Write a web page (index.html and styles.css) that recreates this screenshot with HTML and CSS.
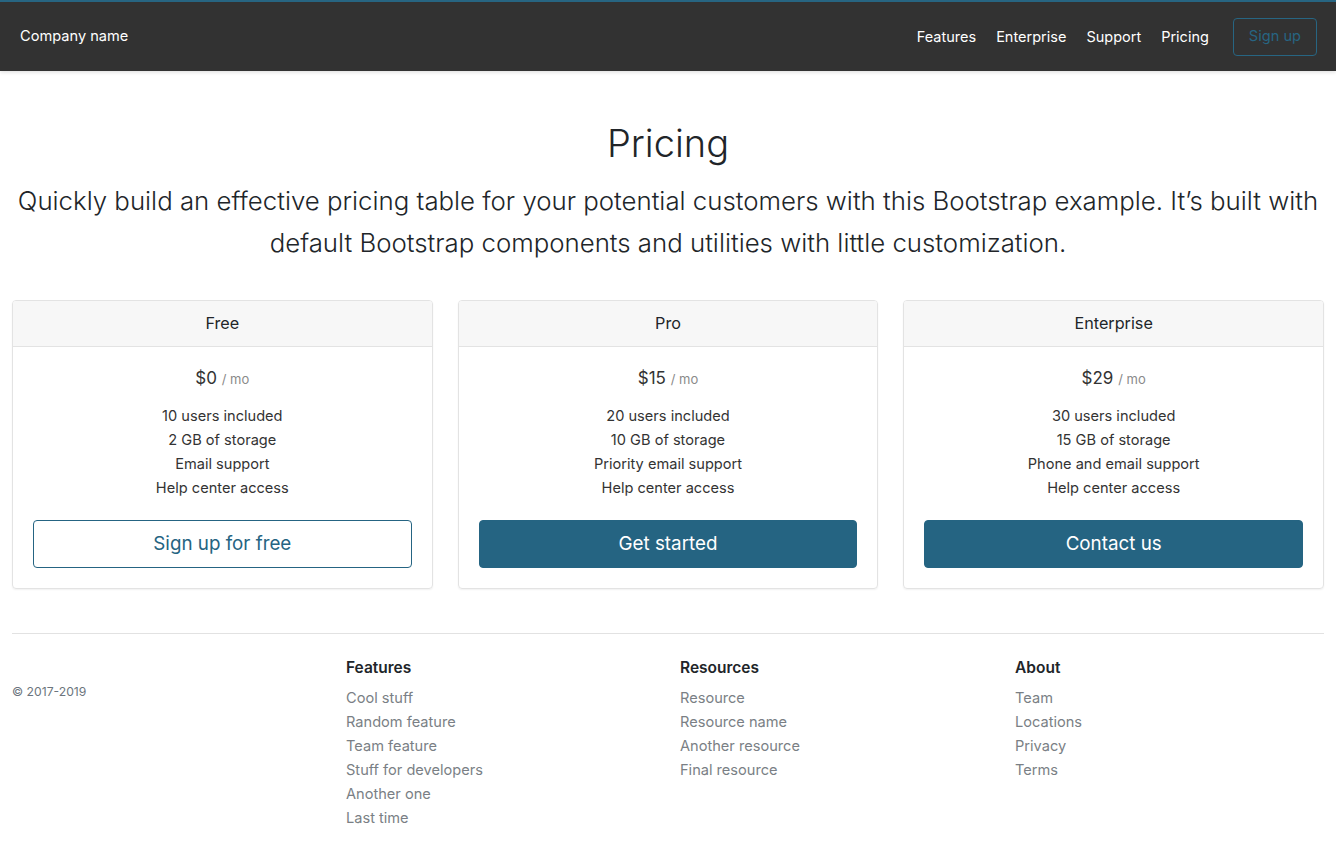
FILE: index.html
```html
<!DOCTYPE html>
<html lang="en">
<head>
<meta charset="utf-8">
<title>Pricing</title>
<link rel="stylesheet" href="styles.css">
</head>
<body>
<header class="navbar">
  <a class="brand" href="#">Company name</a>
  <nav class="nav">
    <a href="#">Features</a>
    <a href="#">Enterprise</a>
    <a href="#">Support</a>
    <a href="#">Pricing</a>
  </nav>
  <a class="btn-signup" href="#">Sign up</a>
</header>

<section class="hero">
  <h1>Pricing</h1>
  <p class="lead">Quickly build an effective pricing table for your potential customers with this Bootstrap example. It’s built with default Bootstrap components and utilities with little customization.</p>
</section>

<main class="cards">
  <div class="card">
    <div class="card-header">Free</div>
    <div class="card-body">
      <div class="price">$0 <small>/ mo</small></div>
      <ul class="features">
        <li>10 users included</li>
        <li>2 GB of storage</li>
        <li>Email support</li>
        <li>Help center access</li>
      </ul>
      <a class="btn btn-outline" href="#">Sign up for free</a>
    </div>
  </div>
  <div class="card">
    <div class="card-header">Pro</div>
    <div class="card-body">
      <div class="price">$15 <small>/ mo</small></div>
      <ul class="features">
        <li>20 users included</li>
        <li>10 GB of storage</li>
        <li>Priority email support</li>
        <li>Help center access</li>
      </ul>
      <a class="btn btn-solid" href="#">Get started</a>
    </div>
  </div>
  <div class="card">
    <div class="card-header">Enterprise</div>
    <div class="card-body">
      <div class="price">$29 <small>/ mo</small></div>
      <ul class="features">
        <li>30 users included</li>
        <li>15 GB of storage</li>
        <li>Phone and email support</li>
        <li>Help center access</li>
      </ul>
      <a class="btn btn-solid" href="#">Contact us</a>
    </div>
  </div>
</main>

<footer class="footer">
  <div class="footer-grid">
    <div class="copy">© 2017-2019</div>
    <div class="fcol">
      <h5>Features</h5>
      <ul>
        <li><a href="#">Cool stuff</a></li>
        <li><a href="#">Random feature</a></li>
        <li><a href="#">Team feature</a></li>
        <li><a href="#">Stuff for developers</a></li>
        <li><a href="#">Another one</a></li>
        <li><a href="#">Last time</a></li>
      </ul>
    </div>
    <div class="fcol">
      <h5>Resources</h5>
      <ul>
        <li><a href="#">Resource</a></li>
        <li><a href="#">Resource name</a></li>
        <li><a href="#">Another resource</a></li>
        <li><a href="#">Final resource</a></li>
      </ul>
    </div>
    <div class="fcol">
      <h5>About</h5>
      <ul>
        <li><a href="#">Team</a></li>
        <li><a href="#">Locations</a></li>
        <li><a href="#">Privacy</a></li>
        <li><a href="#">Terms</a></li>
      </ul>
    </div>
  </div>
</footer>
</body>
</html>
```

FILE: styles.css
```css
* { box-sizing: border-box; }
html, body { margin: 0; padding: 0; }
body {
  font-family: Inter, "Noto Sans", "Liberation Sans", sans-serif;
  color: #212529;
  background: #fff;
  font-size: 16px;
  line-height: 1.5;
}
a { text-decoration: none; }
ul { list-style: none; margin: 0; padding: 0; }

.navbar {
  height: 71px;
  background: #323232;
  border-top: 2px solid #276582;
  display: flex;
  align-items: center;
  padding: 0 19px 0 20px;
  box-shadow: 0 1px 4px rgba(0,0,0,0.15);
}
.brand {
  color: #fff;
  font-size: 14.6px;
  flex: 1;
}
.nav {
  display: flex;
  gap: 20px;
  margin-right: 24px;
}
.nav a {
  color: #fff;
  font-size: 14.5px;
}
.btn-signup {
  color: #276582;
  border: 1px solid #276582;
  border-radius: 4px;
  font-size: 14.6px;
  height: 38px;
  padding: 0 15px;
  display: flex;
  align-items: center;
}

.hero {
  text-align: center;
  padding: 48px 12px 0;
}
.hero h1 {
  margin: 0;
  font-size: 38px;
  font-weight: 300;
  line-height: 48px;
}
.lead {
  margin: 13px 0 0;
  font-size: 25.8px;
  font-weight: 300;
  line-height: 42px;
}

.cards {
  display: grid;
  grid-template-columns: repeat(3, 1fr);
  gap: 25px;
  padding: 0 12px;
  margin-top: 36px;
}
.card {
  border: 1px solid #e3e3e3;
  border-radius: 4px;
  box-shadow: 0 1px 2px rgba(0,0,0,0.06);
  overflow: hidden;
}
.card-header {
  background: #f7f7f7;
  border-bottom: 1px solid #e3e3e3;
  text-align: center;
  height: 46px;
  line-height: 45px;
  font-size: 16.2px;
}
.card-body {
  padding: 17px 20px 20px;
  text-align: center;
}
.price {
  font-size: 17px;
  line-height: 28px;
  color: #333;
}
.price small {
  font-size: 13px;
  color: #8a8a8a;
}
.features {
  margin-top: 11px;
  margin-bottom: 20px;
  color: #333;
  font-size: 14.6px;
  line-height: 24px;
}
.btn {
  display: block;
  height: 48px;
  line-height: 45px;
  border-radius: 4px;
  font-size: 18.8px;
  border: 1px solid #256482;
}
.btn-outline {
  color: #256482;
  background: #fff;
}
.btn-solid {
  color: #fff;
  background: #256482;
}

.footer {
  margin: 44px 12px 0;
  border-top: 1px solid #e2e2e2;
  padding-top: 22px;
  padding-bottom: 20px;
}
.footer-grid {
  display: grid;
  grid-template-columns: 334px 334px 335px 1fr;
}
.copy {
  font-size: 12.2px;
  color: #6c757d;
  padding-top: 27px;
}
.fcol h5 {
  margin: 0 0 6px;
  font-size: 15.5px;
  font-weight: 600;
  line-height: 24px;
  color: #212529;
}
.fcol li {
  font-size: 14.6px;
  line-height: 24px;
}
.fcol a {
  color: #7a7f85;
}
```
